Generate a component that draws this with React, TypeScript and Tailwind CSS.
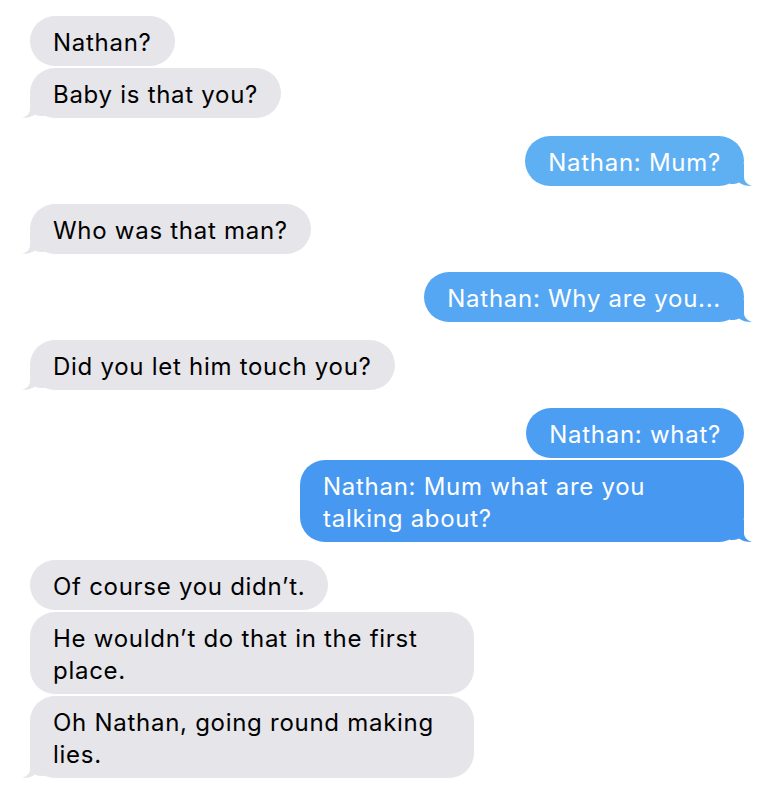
type Msg = { text: string; me?: boolean; tail?: boolean; color?: string };

const groups: Msg[][] = [
  [{ text: 'Nathan?' }, { text: 'Baby is that you?', tail: true }],
  [{ text: 'Nathan: Mum?', me: true, tail: true, color: '#5fb0f3' }],
  [{ text: 'Who was that man?', tail: true }],
  [{ text: 'Nathan: Why are you...', me: true, tail: true, color: '#55a7f3' }],
  [{ text: 'Did you let him touch you?', tail: true }],
  [
    { text: 'Nathan: what?', me: true, color: '#4c9ef2' },
    { text: 'Nathan: Mum what are you talking about?', me: true, tail: true, color: '#4798f1' },
  ],
  [
    { text: 'Of course you didn\u2019t.' },
    { text: 'He wouldn\u2019t do that in the first place.' },
    { text: 'Oh Nathan, going round making lies.', tail: true },
  ],
];

const Tail = ({ me, color }: { me?: boolean; color: string }) => {
  if (me) {
    return (
      <svg
        className="absolute -right-[8px] bottom-0"
        width="22"
        height="22"
        viewBox="0 0 22 22"
        fill={color}
      >
        <path d="M14 0 L14 13 C14 17 17 20.5 22 22 C16.5 22 12 21 9 18.5 C7 19.5 4 20 0 20 L0 0 Z" />
      </svg>
    );
  }
  return (
    <svg
      className="absolute -left-[8px] bottom-0"
      width="22"
      height="22"
      viewBox="0 0 22 22"
      fill={color}
    >
      <path d="M8 0 L8 13 C8 17 5 20.5 0 22 C5.5 22 10 21 13 18.5 C15 19.5 18 20 22 20 L22 0 Z" />
    </svg>
  );
};

const Bubble = ({ msg }: { msg: Msg }) => {
  const color = msg.me ? msg.color ?? '#4c9ef2' : '#e5e5ea';
  return (
    <div className={msg.me ? 'flex justify-end' : 'flex justify-start'}>
      <div
        className={
          'relative max-w-[444px] rounded-[25px] px-[23px] pt-[11px] pb-[7px] text-[24px] leading-[32px] tracking-[0.03em] ' +
          (msg.me ? 'text-white' : 'text-black')
        }
        style={{ backgroundColor: color }}
      >
        {msg.tail && <Tail me={msg.me} color={color} />}
        <span className="relative">{msg.text}</span>
      </div>
    </div>
  );
};

export default function App() {
  return (
    <div
      className="min-h-[792px] w-[772px] bg-white pt-[16px] pl-[30px] pr-[28px] flex flex-col gap-[18px]"
      style={{ fontFamily: 'Inter, "Noto Sans", sans-serif' }}
    >
      {groups.map((g, i) => (
        <div key={i} className="flex flex-col gap-[2px]">
          {g.map((m, j) => (
            <Bubble key={j} msg={m} />
          ))}
        </div>
      ))}
    </div>
  );
}
